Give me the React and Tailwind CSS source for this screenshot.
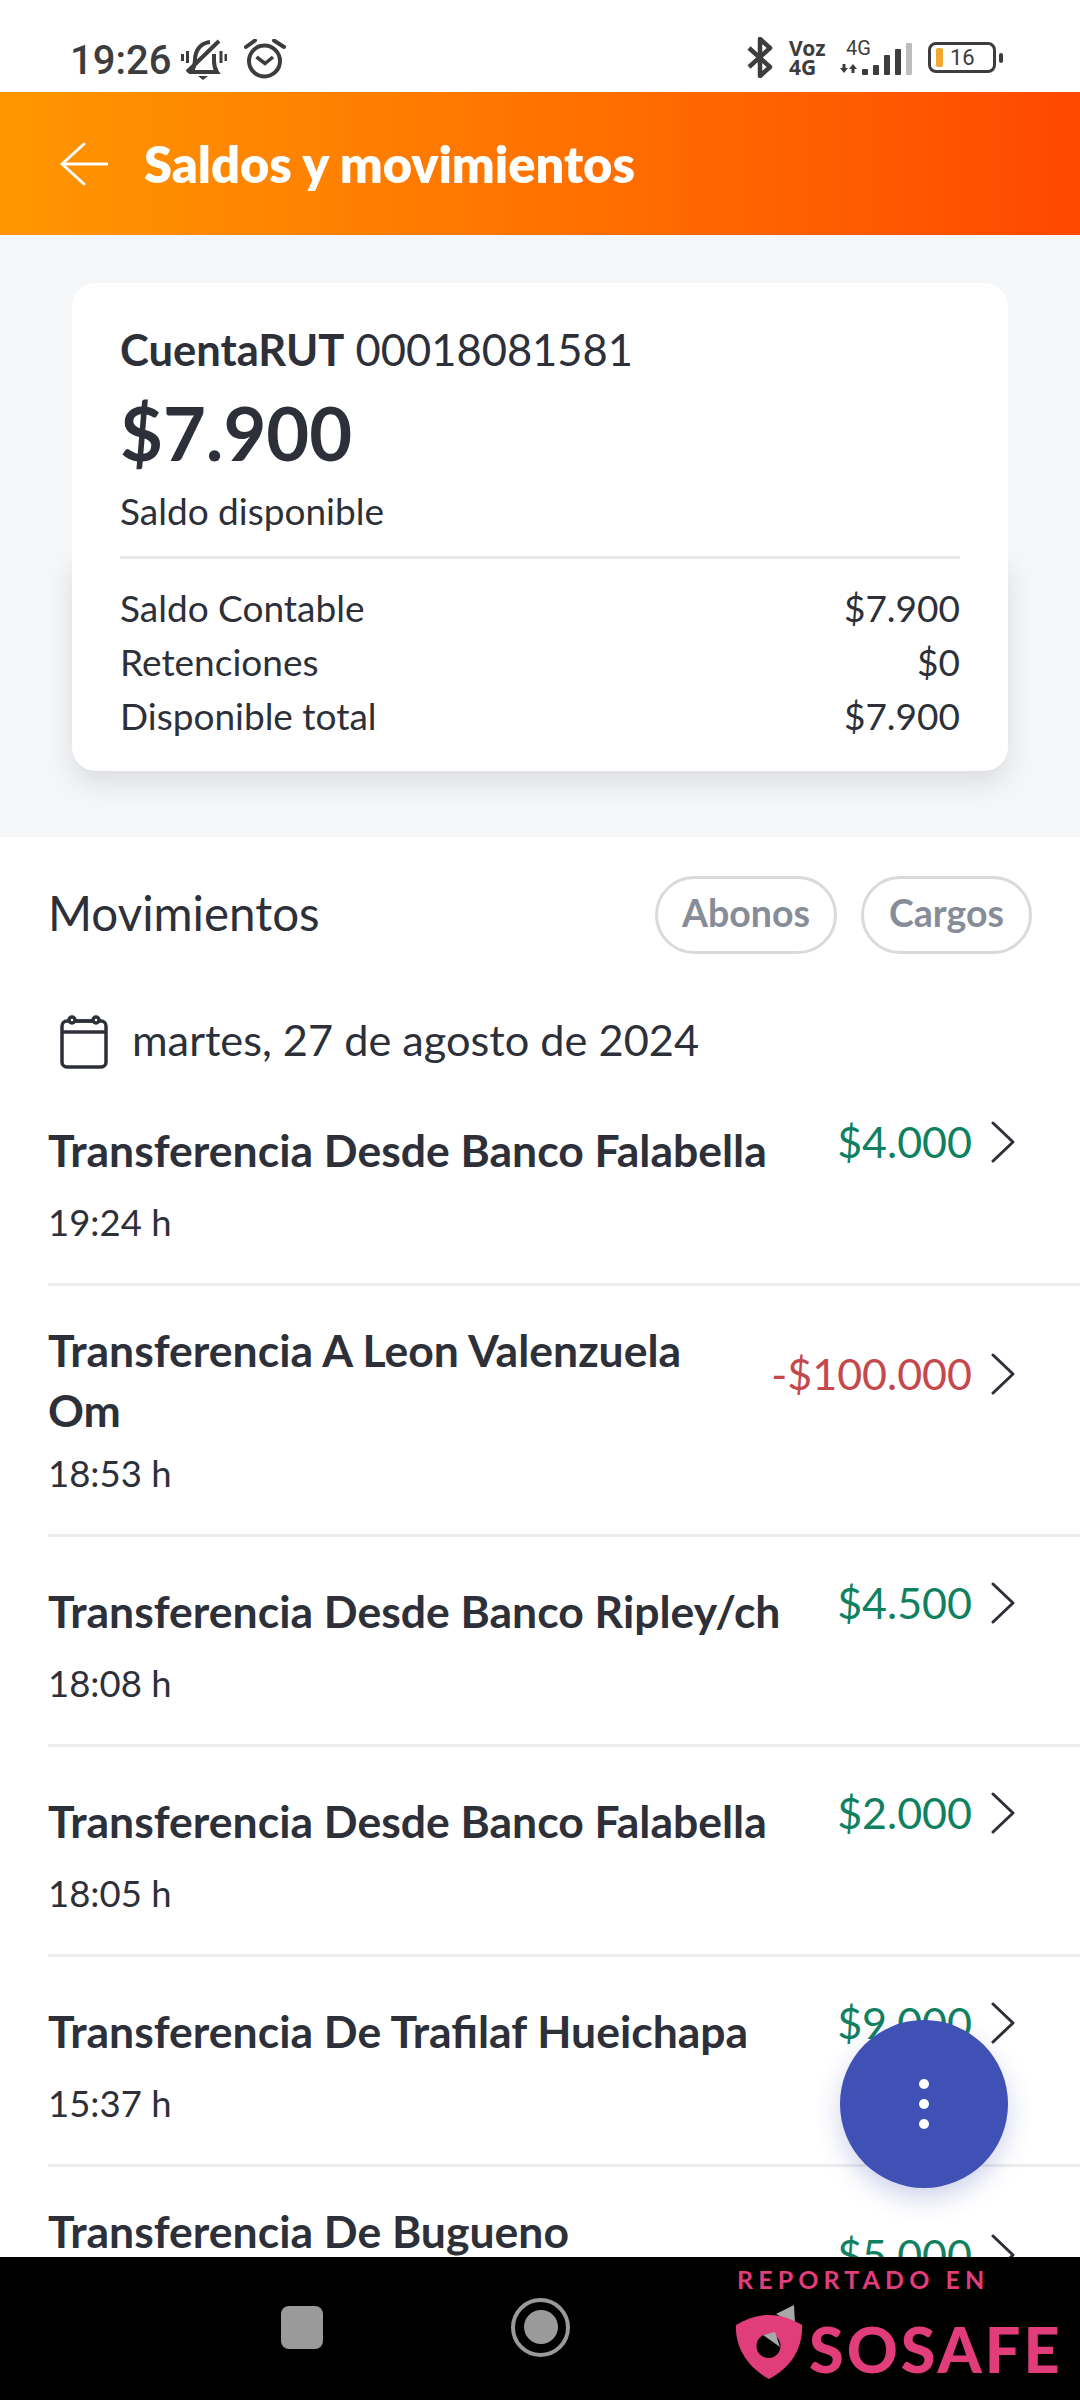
import React from "react";

const rows = [
  { title: "Transferencia Desde Banco Falabella", time: "19:24 h", amount: "$4.000" },
  { title: "Transferencia A Leon Valenzuela Om", time: "18:53 h", amount: "-$100.000", out: true, wrapped: true },
  { title: "Transferencia Desde Banco Ripley/ch", time: "18:08 h", amount: "$4.500" },
  { title: "Transferencia Desde Banco Falabella", time: "18:05 h", amount: "$2.000" },
  { title: "Transferencia De Trafilaf Hueichapa", time: "15:37 h", amount: "$9.000" },
  { title: "Transferencia De Bugueno", amount: "$5.000", wrapped: true },
];

const totals = [
  ["Saldo Contable", "$7.900"],
  ["Retenciones", "$0"],
  ["Disponible total", "$7.900"],
];

const StatusBar = () => (
  <div className="h-[92px] shrink-0 bg-white flex items-start justify-between pl-[70px] pr-[77px] pt-[37px] text-[#3d3d3d]">
    <div className="flex items-start mt-[2px]">
      <span className="text-[40px] leading-[40px] mt-[2px] font-medium font-['Roboto',sans-serif]">19:26</span>
      <svg width="46" height="42" viewBox="0 0 46 42" fill="none" stroke="#3d3d3d" strokeWidth="4" className="ml-[10px]">
        <path d="M11 33c2-4 3-7 3-12 0-10 6-17 15-18" />
        <path d="M33 15v7c0 5 1 8 3 11H8" />
        <path d="M6 33 38 2" />
        <path d="M17 37h10l-5 4z" fill="#3d3d3d" stroke="none" />
        <path d="M1.500 15v7M6.500 12v12M40 12v12M45 15v7" strokeWidth="3" />
      </svg>
      <svg width="42" height="40" viewBox="0 0 42 40" fill="none" stroke="#3d3d3d" strokeWidth="4" className="ml-[17px]">
        <circle cx="20.500" cy="22" r="15.500" />
        <path d="M12.500 18l8.500 6.500 8-6.500" strokeWidth="3.500" />
        <path d="M2 8l9-6.500M30 1.500 40 8" strokeLinecap="round" />
      </svg>
    </div>
    <div className="flex items-center h-[41px]">
      <svg width="26" height="41" viewBox="0 0 26 41" fill="none" stroke="#3d3d3d" strokeWidth="4.500" strokeLinejoin="round">
        <path d="M2 11l21 19-10 9V2l10 9L2 30" />
      </svg>
      <div className="ml-[16px] w-[37px] flex flex-col text-[21px] leading-[18.500px] font-bold font-['Noto_Sans',sans-serif]">
        <span>Voz</span>
        <span>4G</span>
      </div>
      <div className="ml-[14px] relative w-[72px] h-[35px] flex items-end gap-[5px]">
        <span className="absolute left-[6px] top-[-2px] text-[20px] leading-[20px] font-['Roboto',sans-serif]">4G</span>
        <svg width="17" height="9" viewBox="0 0 17 9" fill="#3d3d3d" className="mb-[2px]">
          <path d="M0 4h2.500V0h3v4H8L4 9zM9 5h2.500v4h3V5H17L13 0z" />
        </svg>
        <span className="w-[6px] h-[6px] rounded-[1px] bg-[#3d3d3d]" />
        <span className="w-[6px] h-[10px] rounded-[1px] bg-[#3d3d3d]" />
        <span className="w-[6px] h-[20px] rounded-[1px] bg-[#3d3d3d]" />
        <span className="w-[6px] h-[26px] rounded-[1px] bg-[#3d3d3d]" />
        <span className="w-[6px] h-[32px] rounded-[1px] bg-[#bdbdbd]" />
      </div>
      <div className="ml-[16px] w-[68px] h-[31px] rounded-[8px] border-[3px] border-[#3d3d3d] flex items-center pl-[5px]">
        <span className="w-[7px] h-[19px] rounded-[2px] bg-[#f0a92e]" />
        <span className="ml-[7px] text-[22px] leading-none font-['Roboto',sans-serif]">16</span>
      </div>
      <span className="ml-[3px] w-[4px] h-[10px] rounded-[2px] bg-[#3d3d3d]" />
    </div>
  </div>
);

const Chevron = () => (
  <svg width="26" height="42" viewBox="0 0 26 42" fill="none" stroke="#2d3039" strokeWidth="3" strokeLinecap="round" strokeLinejoin="round" className="shrink-0">
    <path d="M3 2l20 19L3 40" />
  </svg>
);

const Row = ({ title, time, amount, out, wrapped }) => (
  <div className={`ml-[48px] border-b-[3px] border-[#ececee] pb-[39px] pr-[64px] flex justify-between gap-[30px] ${wrapped ? "pt-[34px]" : "pt-[44px]"}`}>
    <div className="min-w-0">
      <div className="text-[44.500px] leading-[60px] font-bold text-[#2d3039]">{title}</div>
      {time && <div className={`text-[36.500px] leading-[44px] text-[#2d3039] ${wrapped ? "mt-[11px]" : "mt-[20px]"}`}>{time}</div>}
    </div>
    <div className={`shrink-0 flex items-center gap-[18px] h-[46px] ${wrapped ? "mt-[31px]" : "-mt-[1px]"}`}>
      <span className={`text-[43px] leading-[46px] whitespace-nowrap ${out ? "text-[#c5484d]" : "text-[#0f8060]"}`}>{amount}</span>
      <Chevron />
    </div>
  </div>
);

export default function App() {
  return (
    <div className="relative w-[1080px] h-[2400px] overflow-hidden bg-white flex flex-col font-['Lato',sans-serif] text-[#2d3039]">
      <StatusBar />

      <div className="h-[143px] shrink-0 bg-gradient-to-r from-[#ff9600] to-[#ff4700] flex items-center pl-[60px]">
        <svg width="48" height="44" viewBox="0 0 48 44" fill="none" stroke="white" strokeWidth="3" strokeLinecap="round" strokeLinejoin="round">
          <path d="M24 2 2 22l22 20M2 22h45" />
        </svg>
        <div className="ml-[36px] text-[50.500px] font-extrabold text-white">Saldos y movimientos</div>
      </div>

      <div className="h-[602px] shrink-0 bg-[#f5f6f8] pt-[48px] pl-[72px]">
        <div className="w-[936px] h-[488px] flex flex-col">
          <div className="relative z-10 h-[273px] shrink-0 rounded-t-[24px] bg-white px-[48px] pt-[41px]">
            <div className="text-[43.500px] leading-[50px]">
              <span className="font-bold">CuentaRUT</span> 00018081581
            </div>
            <div className="mt-[14px] text-[74px] leading-[90px] font-bold">$7.900</div>
            <div className="mt-[8px] text-[37px] leading-[50px]">Saldo disponible</div>
          </div>
          <div className="flex-1 rounded-b-[24px] bg-white px-[48px] shadow-[0_12px_24px_rgba(40,50,60,0.12)]">
            <div className="h-[3px] bg-[#e8e8ec]" />
            <div className="mt-[22px] flex flex-col">
              {totals.map(([label, value]) => (
                <div key={label} className="flex justify-between text-[37px] leading-[54px]">
                  <span>{label}</span>
                  <span>{value}</span>
                </div>
              ))}
            </div>
          </div>
        </div>
      </div>

      <div className="flex-1 min-h-0 overflow-hidden">
        <div className="flex items-center justify-between pl-[48px] pr-[48px] pt-[39px]">
          <span className="text-[47.500px] leading-[72px] pb-[5px]">Movimientos</span>
          <div className="flex gap-[24px]">
            <button className="w-[182px] h-[78px] pb-[3px] rounded-full border-[3px] border-[#d9dadc] text-[37.500px] font-bold text-[#878c99]">Abonos</button>
            <button className="w-[171px] h-[78px] pb-[3px] rounded-full border-[3px] border-[#d9dadc] text-[37.500px] font-bold text-[#878c99]">Cargos</button>
          </div>
        </div>
        <div className="flex items-center pl-[60px] mt-[62px] h-[52px]">
          <svg width="48" height="54" viewBox="0 0 48 54" fill="none" stroke="#2d3039" strokeWidth="3.500" strokeLinejoin="round">
            <rect x="2" y="6" width="44" height="46" rx="5" />
            <path d="M2 17h44" />
            <path d="M15 6h18" />
            <circle cx="12" cy="5" r="3" fill="white" />
            <circle cx="36" cy="5" r="3" fill="white" />
          </svg>
          <span className="ml-[24px] pb-[7px] text-[43.300px] leading-[52px]">martes, 27 de agosto de 2024</span>
        </div>
        <div className="mt-[8px]">
          {rows.map((row, i) => (
            <Row key={i} {...row} />
          ))}
        </div>
      </div>

      <div className="h-[143px] shrink-0 bg-black flex items-center pl-[281px] pb-[3px]">
        <span className="w-[42px] h-[43px] rounded-[8px] bg-[#9a9a9a]" />
        <span className="ml-[188px] w-[59px] h-[59px] rounded-full border-[4px] border-[#9a9a9a] flex items-center justify-center">
          <span className="w-[34px] h-[34px] rounded-full bg-[#9a9a9a]" />
        </span>
      </div>

      <button className="absolute left-[840px] top-[2020px] w-[168px] h-[168px] rounded-full bg-[#3f51b5] shadow-[0_10px_24px_rgba(63,81,181,0.25)] flex flex-col items-center justify-center gap-[10px]">
        <span className="w-[10px] h-[10px] rounded-full bg-white" />
        <span className="w-[10px] h-[10px] rounded-full bg-white" />
        <span className="w-[10px] h-[10px] rounded-full bg-white" />
      </button>

      <div className="absolute left-[735px] top-[2263px] text-[#e23d7b]">
        <div className="ml-[2px] text-[25px] leading-[32px] font-bold tracking-[5.100px] whitespace-nowrap">REPORTADO EN</div>
        <div className="flex items-start mt-[9px]">
          <svg width="68" height="76" viewBox="0 0 68 76">
            <path d="M59 1 41 10l19 10z" fill="#a8a8a8" />
            <path d="M1 21c10-6 21-10 33-10 12 0 23 4 33 10 1 22-10 42-33 54C12 63 0 43 1 21z" fill="#e23d7b" />
            <circle cx="33.500" cy="42" r="12" fill="black" />
            <path d="M28 31l12-3 5 15z" fill="#a8a8a8" />
          </svg>
          <span className="ml-[6px] mt-[10px] text-[63px] leading-[70px] font-black tracking-[3px]">SOSAFE</span>
        </div>
      </div>
    </div>
  );
}
